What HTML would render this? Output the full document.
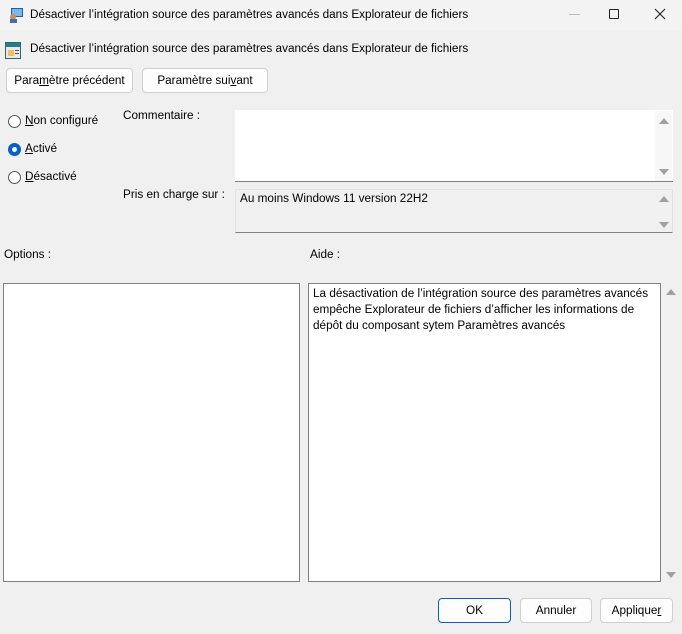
<!DOCTYPE html>
<html><head><meta charset="utf-8"><style>
*{box-sizing:border-box;margin:0;padding:0}
body{width:682px;height:634px;background:#f0f0f0;font-family:"Liberation Sans","DejaVu Sans",sans-serif;font-size:11.75px;color:#000;position:relative;overflow:hidden}
.a{position:absolute;white-space:nowrap}
.tb{position:absolute;left:0;top:0;width:682px;height:30px;background:#f3f3f3}
.btn{position:absolute;background:#fdfdfd;border:1px solid #d0d0d0;border-radius:4px;text-align:center;line-height:23px}
.rad{position:absolute;left:8px;width:13px;height:13px;border:1px solid #555;border-radius:50%;background:#fff}
.box{position:absolute;background:#fff;border:1px solid #808080}
.ar{position:absolute;width:0;height:0;border-left:5px solid transparent;border-right:5px solid transparent}
.up{border-bottom:6px solid #a0a0a0}.dn{border-top:6px solid #a0a0a0}
u{text-decoration:underline}
</style></head><body>
<div class="tb"></div>
<svg class="a" style="left:8px;top:7px" width="16" height="16"><rect x="3" y="1" width="12" height="9" fill="#2a5aa0"/><rect x="4" y="2" width="10" height="7" fill="#7ab8e8"/><circle cx="5" cy="10" r="3" fill="#c89060"/><rect x="2" y="12" width="7" height="4" fill="#4070b0"/></svg>
<div class="a" style="left:30px;top:8px">Désactiver l’intégration source des paramètres avancés dans Explorateur de fichiers</div>
<div class="a" style="left:569px;top:14px;width:11px;height:1px;background:#bbb"></div>
<div class="a" style="left:609px;top:9px;width:10px;height:10px;border:1px solid #222;border-radius:1px"></div>
<svg class="a" style="left:654px;top:8px" width="12" height="12"><path d="M1 1L11 11M11 1L1 11" stroke="#222" stroke-width="1.1"/></svg>
<svg class="a" style="left:5px;top:42px" width="16" height="17"><rect x="0.5" y="0.5" width="15" height="16" fill="#e8e8e8" stroke="#2a6a6a"/><rect x="1" y="1" width="14" height="4" fill="#2a7a8a"/><rect x="3" y="8" width="6" height="6" fill="#f0c060"/><rect x="10" y="8" width="4" height="1" fill="#555"/><rect x="10" y="11" width="4" height="1" fill="#555"/></svg>
<div class="a" style="left:30px;top:42px">Désactiver l’intégration source des paramètres avancés dans Explorateur de fichiers</div>
<div class="btn" style="left:6px;top:68px;width:127px;height:25px">Para<u>m</u>ètre précédent</div>
<div class="btn" style="left:142px;top:68px;width:126px;height:25px">Paramètre sui<u>v</u>ant</div>
<div class="rad" style="top:115px"></div><div class="a" style="left:25px;top:114px"><u>N</u>on configuré</div>
<div class="rad" style="top:143px;border:4px solid #0a5ec4"></div><div class="a" style="left:25px;top:142px"><u>A</u>ctivé</div>
<div class="rad" style="top:171px"></div><div class="a" style="left:25px;top:170px"><u>D</u>ésactivé</div>
<div class="a" style="left:123px;top:109px">Commentaire :</div>
<div class="a" style="left:235px;top:110px;width:438px;height:72px;background:#fff;border-bottom:1px solid #808080"></div>
<div class="a" style="left:655px;top:111px;width:17px;height:70px;background:#f7f7f7"></div>
<div class="ar up" style="left:659px;top:118px"></div><div class="ar dn" style="left:659px;top:169px"></div>
<div class="a" style="left:123px;top:188px">Pris en charge sur :</div>
<div class="a" style="left:235px;top:189px;width:438px;height:44px;background:#f0f0f0;border:1px solid #e0e0e0;border-bottom:1px solid #808080"></div>
<div class="a" style="left:240px;top:192px">Au moins Windows 11 version 22H2</div>
<div class="ar up" style="left:659px;top:196px"></div><div class="ar dn" style="left:659px;top:222px"></div>
<div class="a" style="left:4px;top:248px">Options :</div>
<div class="a" style="left:310px;top:248px">Aide :</div>
<div class="box" style="left:3px;top:283px;width:297px;height:299px"></div>
<div class="box" style="left:308px;top:283px;width:353px;height:299px"></div>
<div class="a" style="left:313px;top:286px;line-height:16px;white-space:normal;width:345px">La désactivation de l’intégration source des paramètres avancés empêche Explorateur de fichiers d’afficher les informations de dépôt du composant sytem Paramètres avancés</div>
<div class="ar up" style="left:666px;top:289px"></div><div class="ar dn" style="left:666px;top:572px"></div>
<div class="btn" style="left:438px;top:598px;width:73px;height:25px;border:1px solid #0a5ec4">OK</div>
<div class="btn" style="left:520px;top:598px;width:72px;height:25px">Annuler</div>
<div class="btn" style="left:600px;top:598px;width:73px;height:25px">Applique<u>r</u></div>
</body></html>
